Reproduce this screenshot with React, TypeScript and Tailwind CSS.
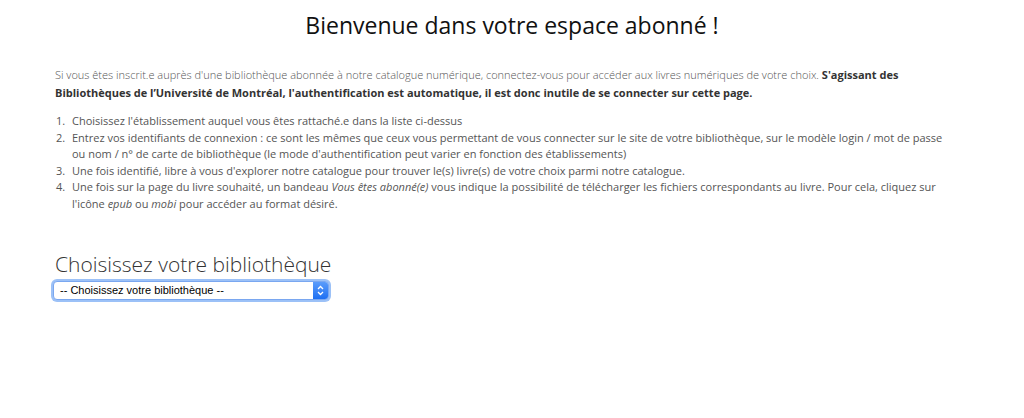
import React from 'react';

const steps: React.ReactNode[] = [
  "Choisissez l'établissement auquel vous êtes rattaché.e dans la liste ci-dessus",
  "Entrez vos identifiants de connexion : ce sont les mêmes que ceux vous permettant de vous connecter sur le site de votre bibliothèque, sur le modèle login / mot de passe ou nom / n° de carte de bibliothèque (le mode d'authentification peut varier en fonction des établissements)",
  "Une fois identifié, libre à vous d'explorer notre catalogue pour trouver le(s) livre(s) de votre choix parmi notre catalogue.",
  <>
    Une fois sur la page du livre souhaité, un bandeau <em>Vous êtes abonné(e)</em> vous indique la
    possibilité de télécharger les fichiers correspondants au livre. Pour cela, cliquez sur l'icône{' '}
    <em>epub</em> ou <em>mobi</em> pour accéder au format désiré.
  </>,
];

export default function App() {
  return (
    <div
      className="min-h-[418px] w-full bg-white text-[#555]"
      style={{ fontFamily: '"Open Sans", sans-serif' }}
    >
      <h1 className="pt-[10px] text-center text-[23px] leading-[30px] text-[#111]">
        Bienvenue dans votre espace abonné !
      </h1>

      <div className="mx-[55px] mt-[26px]">
        <p className="text-[11px] font-light leading-[18px] text-[#555]">
          Si vous êtes inscrit.e auprès d'une bibliothèque abonnée à notre catalogue numérique, connectez-vous
          pour accéder aux livres numériques de votre choix.{' '}
          <strong className="font-bold text-[#333]">
            S'agissant des Bibliothèques de l’Université de Montréal, l'authentification est automatique, il est
            donc inutile de se connecter sur cette page.
          </strong>
        </p>

        <ol className="mt-[11px]">
          {steps.map((s, i) => (
            <li key={i} className="flex text-[11px] leading-[16.6px] text-[#555]">
              <span className="w-[17px] shrink-0 pl-[1px]">{i + 1}.</span>
              <span className="pr-[20px]">{s}</span>
            </li>
          ))}
        </ol>

        <h3 className="mt-[38px] text-[21px] font-light leading-[26px] text-[#333]">
          Choisissez votre bibliothèque
        </h3>

        <div className="relative -ml-[2px] mt-[4px] h-[19px] w-[276px] rounded-[4px] border border-[#7aa7f0] bg-white shadow-[0_0_0_2px_#9cc1f7]">
          <div
            className="flex h-full items-center pl-[6px] text-[11px] text-black"
            style={{ fontFamily: '"Liberation Sans", Arial, sans-serif' }}
          >
            -- Choisissez votre bibliothèque --
          </div>
          <div className="absolute right-0 top-0 flex h-full w-[15px] items-center justify-center rounded-r-[3px] bg-gradient-to-b from-[#5a9cfb] to-[#1c6ff2]">
            <svg width="7" height="11" viewBox="0 0 7 11" fill="none" stroke="white" strokeWidth="1.3">
              <path d="M1 4 L3.5 1.5 L6 4" />
              <path d="M1 7 L3.5 9.5 L6 7" />
            </svg>
          </div>
        </div>
      </div>
    </div>
  );
}
